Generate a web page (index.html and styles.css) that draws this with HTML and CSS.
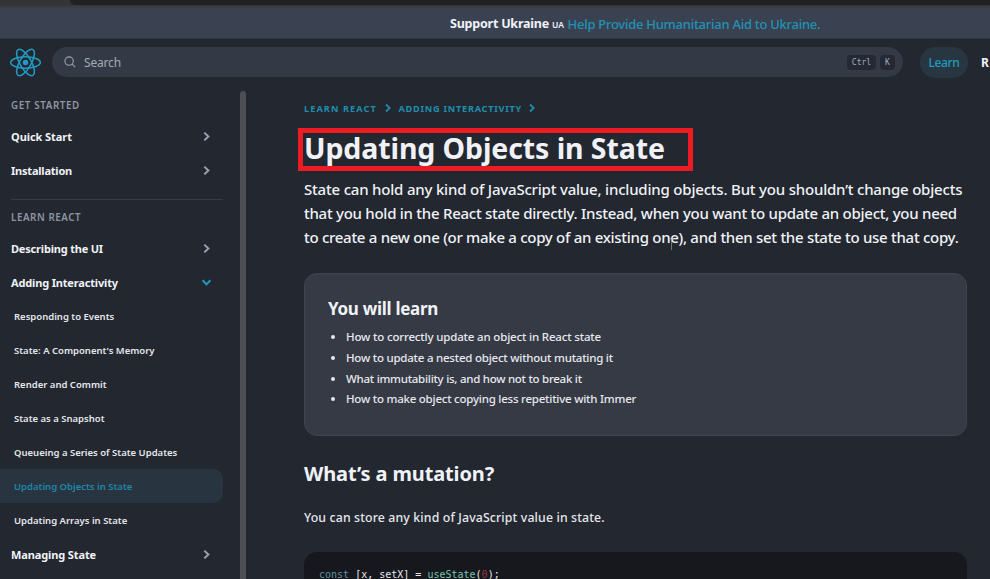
FILE: index.html
```html
<!DOCTYPE html>
<html lang="en">
<head>
<meta charset="utf-8">
<title>Updating Objects in State – React</title>
<link rel="stylesheet" href="styles.css">
</head>
<body>
<svg class="defs" width="0" height="0"><symbol id="chev" viewBox="0 0 10 10"><path d="M3 1.5 6.7 5 3 8.5" fill="none" stroke="currentColor" stroke-width="1.8"/></symbol></svg>
<div class="browser-edge"><span class="tab-edge"></span></div>
<div class="banner"><b>Support Ukraine</b><span class="flag">UA</span><a>Help Provide Humanitarian Aid to Ukraine.</a></div>
<header class="topnav">
  <svg class="logo" viewBox="-11.5 -10.5 23 21"><circle r="2.05" fill="currentColor"/><g fill="none" stroke="currentColor" stroke-width="1.15"><ellipse rx="11" ry="4.2"/><ellipse rx="11" ry="4.2" transform="rotate(60)"/><ellipse rx="11" ry="4.2" transform="rotate(120)"/></g></svg>
  <div class="search">
    <svg class="lens" viewBox="0 0 12 12"><circle cx="5.1" cy="5.1" r="4.2"/><path d="m8.2 8.2 3 3"/></svg>
    <span class="hint">Search</span><kbd class="ctrl">Ctrl</kbd><kbd>K</kbd>
  </div>
  <a class="learn">Learn</a><b class="reference">R</b>
</header>
<div class="page">
  <nav class="sidebar">
    <h3>GET STARTED</h3>
    <a class="section s1">Quick Start<svg><use href="#chev"/></svg></a>
    <a class="section s2">Installation<svg><use href="#chev"/></svg></a>
    <hr>
    <h3 class="second">LEARN REACT</h3>
    <a class="section s3">Describing the UI<svg><use href="#chev"/></svg></a>
    <a class="section s4 open">Adding Interactivity<svg><use href="#chev"/></svg></a>
    <a class="item">Responding to Events</a>
    <a class="item">State: A Component's Memory</a>
    <a class="item">Render and Commit</a>
    <a class="item">State as a Snapshot</a>
    <a class="item">Queueing a Series of State Updates</a>
    <a class="item active">Updating Objects in State</a>
    <a class="item">Updating Arrays in State</a>
    <a class="section s5">Managing State<svg><use href="#chev"/></svg></a>
  </nav>
  <div class="scrollbar"></div>
  <main>
    <div class="crumbs"><a>LEARN REACT</a><svg><use href="#chev"/></svg><a class="c2">ADDING INTERACTIVITY</a><svg><use href="#chev"/></svg></div>
    <div class="marked"><h1>Updating Objects in State</h1></div>
    <p class="lead"><span class="l1">State can hold any kind of JavaScript value, including objects. But you shouldn’t change objects</span> <span class="l2">that you hold in the React state directly. Instead, when you want to update an object, you need</span> <span class="l3">to create a new one (or make a copy of an existing one), and then set the state to use that copy.</span>
      <svg class="caret" viewBox="0 0 5 14"><path d="M.5.5h1.4l.6.6.6-.6h1.4M2.5 1v12"/></svg></p>
    <section class="card">
      <h2>You will learn</h2>
      <ul>
        <li>How to correctly update an object in React state</li>
        <li>How to update a nested object without mutating it</li>
        <li>What immutability is, and how not to break it</li>
        <li>How to make object copying less repetitive with Immer</li>
      </ul>
    </section>
    <h2 class="title">What’s a mutation?</h2>
    <p class="text">You can store any kind of JavaScript value in state.</p>
    <pre><span class="kw">const</span> [x, setX] = <span class="fn">useState</span>(<span class="num">0</span>);</pre>
  </main>
</div>
</body>
</html>
```
FILE: styles.css
```css
* { box-sizing: border-box; }
body { margin: 0; width: 990px; height: 579px; overflow: hidden; background: #23272f; color: #f0f2f7; font-family: "Noto Sans", sans-serif; font-weight: 500; display: flex; flex-direction: column; white-space: nowrap; }
h1, h2, h3, p, ul, pre { margin: 0; }
.defs { position: absolute; }
.browser-edge { height: 8px; flex: none; background: #333438; border-bottom: 2px solid #3c3d42; padding-left: 70px; }
.tab-edge { display: block; height: 5px; background: #202124; border-bottom-left-radius: 5px; }
.banner { height: 31px; flex: none; background: #3a4252; display: flex; align-items: center; padding: 1px 0 0 450px; font-size: 13px; line-height: 30px; border-bottom: 1px solid #303745; }
.banner b { width: 102px; font-size: 12.5px; font-weight: 700; letter-spacing: -.22px; }
.banner .flag { width: 15.5px; font-size: 8.5px; font-weight: 600; padding-top: 2px; letter-spacing: .1px; }
.banner a { color: #1f93b4; letter-spacing: -.27px; }
.topnav { height: 45px; flex: none; display: flex; align-items: center; padding: 1px 0 0 10px; overflow: hidden; }
.topnav > * { flex: none; }
.logo { width: 31px; height: 29px; color: #209bc3; }
.search { width: 851px; height: 30px; margin-left: 11px; border-radius: 15px; background: #333a45; display: flex; align-items: center; padding: 0 8px 0 12px; gap: 4px; }
.lens { width: 12px; height: 12px; fill: none; stroke: #99a1b3; stroke-width: 1.1; }
.hint { flex: 1; margin-left: 4px; font-size: 12px; font-weight: 400; letter-spacing: -.17px; color: #a3aab8; }
kbd { height: 15px; width: 15px; border-radius: 4px; background: #242933; color: #a3aab8; font: 8px/15px "DejaVu Sans Mono", monospace; text-align: center; }
.ctrl { width: 29px; }
.learn { width: 48px; height: 31px; margin-left: 17px; border-radius: 16px; background: #283642; color: #209bbf; font-size: 12px; line-height: 32px; letter-spacing: -.35px; text-align: center; }
.reference { margin-left: 13px; font-size: 12px; font-weight: 700; }
.page { flex: 1; min-height: 0; display: flex; overflow: hidden; }
.sidebar { width: 223px; flex: none; padding-top: 13px; }
.sidebar h3 { height: 17px; margin-left: 11px; font-size: 9.8px; line-height: 17px; font-weight: 600; letter-spacing: .62px; color: #8e95a3; }
.section, .item { display: flex; align-items: center; height: 34px; padding-left: 11px; }
.section { font-size: 11px; font-weight: 700; justify-content: space-between; padding-right: 11px; }
.section svg { width: 11px; height: 11px; color: #99a1b3; }
.section use { transform: scale(1); }
.s1 { margin-top: 5px; letter-spacing: -.07px; }
.s2 { letter-spacing: -.21px; }
.s3 { letter-spacing: -.19px; }
.s4 { letter-spacing: -.16px; }
.s5 { letter-spacing: -.12px; }
.open svg { color: #209bc3; transform: rotate(90deg); }
hr { border: 0; height: 1px; margin: 12px 0 9px 11px; background: #373d47; }
.sidebar .second { margin-bottom: 5px; letter-spacing: .57px; }
.item { padding: 1px 0 0 14px; font-size: 9.5px; font-weight: 600; color: #e3e6ec; }
.active { background: #283541; color: #1f86a6; border-radius: 0 10px 10px 0; }
.scrollbar { width: 6px; margin: 7px 0 0 17px; flex: none; border-radius: 3px 3px 0 0; background: #4c4f56; }
main { width: 663px; margin-left: 58px; padding-top: 16px; flex: none; }
.crumbs { height: 16px; display: flex; align-items: center; color: #1f8dac; font-size: 9.2px; font-weight: 700; }
.crumbs a { width: 79px; letter-spacing: 1.07px; }
.crumbs .c2 { width: 128.5px; margin-left: 5.5px; letter-spacing: .73px; }
.crumbs svg { width: 10px; height: 10px; }
.marked { width: 395px; height: 43px; margin: 12px 0 6px -6px; padding-left: 1px; border: 5px solid #ed1c24; }
h1 { font-size: 28.5px; line-height: 30px; font-weight: 700; letter-spacing: -.1px; }
.lead { position: relative; height: 72px; font-size: 15px; line-height: 24px; }
.lead span { display: block; }
.l1 { letter-spacing: -.2px; }
.l2 { letter-spacing: -.27px; }
.l3 { letter-spacing: -.29px; }
.caret { position: absolute; left: 365px; top: 61px; width: 5px; height: 13px; fill: none; stroke: #999da6; stroke-width: .7; }
.card { height: 163px; margin-top: 24px; padding: 22px 24px; background: #363a45; border: 1px solid #40444f; border-radius: 13px; }
.card h2 { font-size: 17px; line-height: 25px; letter-spacing: -.29px; margin-left: -1px; }
ul { margin-top: 6px; padding-left: 17px; font-size: 11.5px; line-height: 20.8px; color: #e6e8ee; }
li { letter-spacing: -.23px; }
li:first-child { letter-spacing: -.17px; }
li:nth-child(3) { letter-spacing: -.27px; }
.title { height: 28px; margin-top: 24px; font-size: 20px; line-height: 28px; font-weight: 700; letter-spacing: -.13px; }
.text { margin-top: 19px; font-size: 12.3px; line-height: 22px; letter-spacing: .14px; color: #e6e8ee; }
pre { height: 27px; margin-top: 23px; padding: 14px 15px 0; overflow: hidden; border-radius: 13px 13px 0 0; background: #16181d; color: #e6e8ee; font: 10px/18px "DejaVu Sans Mono", monospace; }
.kw { color: #608fa9; }
.fn { color: #73c7ae; }
.num { color: #9b3547; }
```
